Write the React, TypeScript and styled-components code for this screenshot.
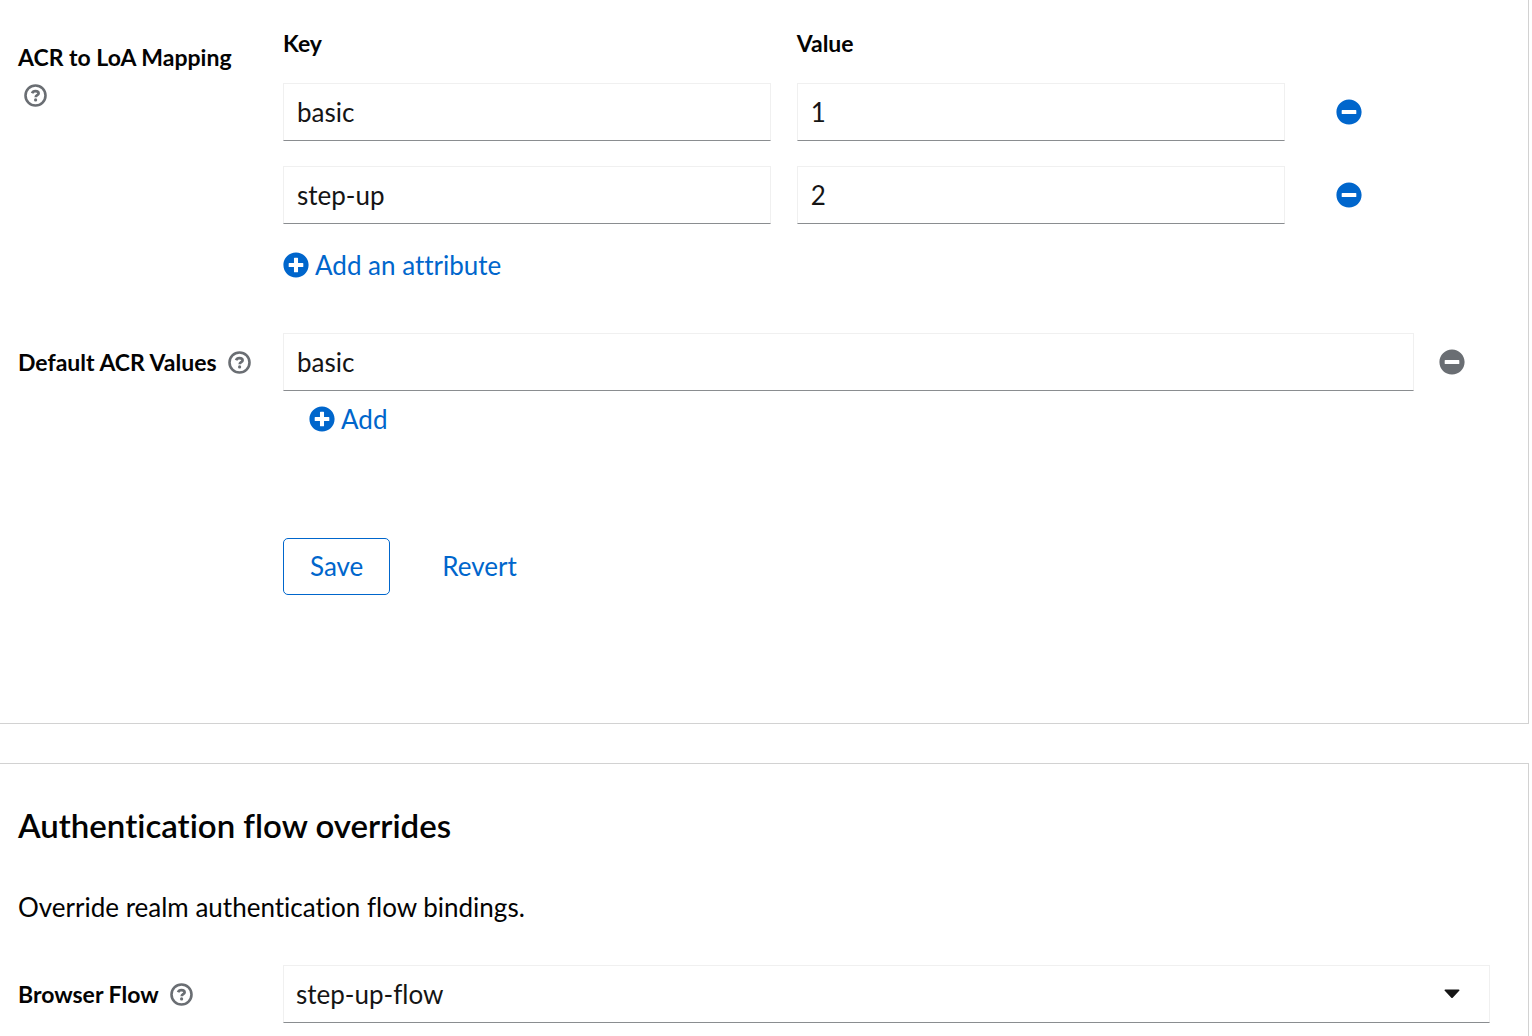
import React, { useState } from "react";
import styled, { createGlobalStyle } from "styled-components";
import { FaMinusCircle, FaPlusCircle } from "react-icons/fa";

const color = {
  text: "#151515",
  heading: "#030303",
  link: "#0066cc",
  muted: "#6a6e73",
  line: "#d2d2d2",
  fieldLine: "#f0f0f0",
  fieldBase: "#8a8d90",
};

const GlobalStyle = createGlobalStyle`
  *, *::before, *::after { box-sizing: border-box; }
  body {
    margin: 0;
    background: #fff;
    color: ${color.heading};
    font-family: Lato, "Liberation Sans", sans-serif;
    font-size: 26px;
    font-variant-ligatures: no-common-ligatures;
  }
  button, input, select { font: inherit; font-variant-ligatures: inherit; }
`;

const Page = styled.main`
  display: flex;
  flex-direction: column;
  gap: 39px;
  min-height: 100vh;
  padding-right: 3px;
  overflow: hidden;
`;

const Card = styled.section<{ $first?: boolean }>`
  padding: ${(p) => (p.$first ? "28px 38px 128px 18px" : "40px 38px 13px 18px")};
  border: 1px solid ${color.line};
  border-left: 0;
  ${(p) => (p.$first ? "border-top: 0;" : "border-bottom: 0; flex: 1;")}
`;

const Title = styled.h2`
  margin: 0 0 42px;
  font-size: 33px;
  line-height: 42px;
  font-weight: 600;
`;

const Description = styled.p`
  margin: 0 0 39px;
  line-height: 38px;
`;

const FormGroup = styled.div<{ $after?: number }>`
  display: grid;
  grid-template-columns: 265px minmax(0, 1fr);
  margin-bottom: ${(p) => p.$after ?? 0}px;
`;

const LabelCell = styled.div`
  padding: 10px 24px 0 0;
  line-height: 38px;
  font-size: 23px;
  font-weight: 700;
`;

const HelpButton = styled.button`
  display: inline-flex;
  margin: 0 0 0 6px;
  padding: 0;
  border: 0;
  background: none;
  color: ${color.muted};
  vertical-align: -3px;
  cursor: pointer;
`;

const FieldCell = styled.div`
  min-width: 0;
`;

const KeyValueGrid = styled.div`
  display: grid;
  grid-template-columns: repeat(12, minmax(0, 1fr));
  column-gap: 26px;
`;

const KeyValueHeader = styled(KeyValueGrid)`
  margin-bottom: 25px;
  font-size: 23px;
  line-height: 30px;
  font-weight: 700;
`;

const KeyValueRow = styled(KeyValueGrid)`
  margin-bottom: 25px;
`;

const WideCell = styled.div`
  grid-column: span 5;
`;

const ActionCell = styled.div`
  display: flex;
  grid-column: span 2;
`;

const TextInput = styled.input`
  display: block;
  width: 100%;
  min-width: 0;
  height: 58px;
  padding: 0 13px;
  border: 1px solid ${color.fieldLine};
  border-bottom-color: ${color.fieldBase};
  border-radius: 0;
  background: #fff;
  color: ${color.text};
`;

const InputRow = styled.div`
  display: flex;
  margin-bottom: 12px;
`;

const RemoveButton = styled.button<{ $muted?: boolean }>`
  display: flex;
  align-items: center;
  padding: 0 25px 1px;
  border: 0;
  background: none;
  color: ${(p) => (p.$muted ? color.muted : color.link)};
  cursor: pointer;
`;

const AddButton = styled.button<{ $indent?: boolean }>`
  display: flex;
  align-items: center;
  gap: 6px;
  margin-left: ${(p) => (p.$indent ? 26 : 0)}px;
  padding: 0;
  border: 0;
  background: none;
  color: ${color.link};
  line-height: 32px;
  cursor: pointer;
`;

const Actions = styled.div`
  display: flex;
  gap: 25px;
`;

const ActionButton = styled.button<{ $outlined?: boolean }>`
  height: 57px;
  padding: 0 26px 2px;
  border: 1px solid ${(p) => (p.$outlined ? color.link : "transparent")};
  border-radius: 5px;
  background: none;
  color: ${color.link};
  cursor: pointer;
`;

const SelectBox = styled.div`
  display: grid;
  grid-template-columns: minmax(0, 1fr) auto;
  align-items: center;
`;

const Select = styled.select`
  grid-area: 1 / 1 / 2 / 3;
  height: 58px;
  padding: 0 64px 0 12px;
  border: 1px solid ${color.fieldLine};
  border-bottom-color: ${color.fieldBase};
  border-radius: 0;
  background: #fff;
  color: ${color.text};
  appearance: none;
`;

const Caret = styled.svg`
  grid-area: 1 / 2;
  margin-right: 30px;
  pointer-events: none;
`;

function Help({ topic }: { topic: string }) {
  return (
    <HelpButton type="button" aria-label={`Help for ${topic}`}>
      <svg width="23" height="23" viewBox="0 0 23 23" fill="none" aria-hidden="true">
        <circle cx="11.5" cy="11.5" r="10" stroke="currentColor" strokeWidth="2.6" />
        <path
          d="M8.1 9.2C8.6 7.8 9.8 7.1 11.4 7.1c1.9 0 3.2 .9 3.2 2.3 0 1.8-2.9 1.8-2.9 3.8"
          stroke="currentColor"
          strokeWidth="2.7"
        />
        <circle cx="11.6" cy="15.9" r="1.6" fill="currentColor" />
      </svg>
    </HelpButton>
  );
}

export default function App() {
  const [mappings, setMappings] = useState([
    { key: "basic", value: "1" },
    { key: "step-up", value: "2" },
  ]);
  const [acr, setAcr] = useState(["basic"]);

  const update = (index: number, field: "key" | "value", text: string) =>
    setMappings(mappings.map((m, i) => (i === index ? { ...m, [field]: text } : m)));

  return (
    <>
      <GlobalStyle />
      <Page>
        <Card $first>
          <FormGroup $after={52}>
            <LabelCell>
              <span id="acr-loa">ACR to LoA Mapping</span> <Help topic="ACR to LoA Mapping" />
            </LabelCell>
            <FieldCell role="group" aria-labelledby="acr-loa">
              <KeyValueHeader>
                <WideCell id="col-key">Key</WideCell>
                <WideCell id="col-value">Value</WideCell>
              </KeyValueHeader>
              {mappings.map((m, i) => (
                <KeyValueRow key={i}>
                  <WideCell>
                    <TextInput
                      aria-labelledby="col-key"
                      value={m.key}
                      onChange={(e) => update(i, "key", e.target.value)}
                    />
                  </WideCell>
                  <WideCell>
                    <TextInput
                      aria-labelledby="col-value"
                      value={m.value}
                      onChange={(e) => update(i, "value", e.target.value)}
                    />
                  </WideCell>
                  <ActionCell>
                    <RemoveButton
                      type="button"
                      aria-label="Remove attribute"
                      onClick={() => setMappings(mappings.filter((_, n) => n !== i))}
                    >
                      <FaMinusCircle size={26} />
                    </RemoveButton>
                  </ActionCell>
                </KeyValueRow>
              ))}
              <AddButton type="button" onClick={() => setMappings([...mappings, { key: "", value: "" }])}>
                <FaPlusCircle size={26} />
                Add an attribute
              </AddButton>
            </FieldCell>
          </FormGroup>

          <FormGroup $after={103}>
            <LabelCell>
              <label htmlFor="acr-0">Default ACR Values</label> <Help topic="Default ACR Values" />
            </LabelCell>
            <FieldCell>
              {acr.map((value, i) => (
                <InputRow key={i}>
                  <TextInput
                    id={`acr-${i}`}
                    aria-label={i > 0 ? "Default ACR Values" : undefined}
                    value={value}
                    onChange={(e) => setAcr(acr.map((v, n) => (n === i ? e.target.value : v)))}
                  />
                  <RemoveButton type="button" $muted aria-label="Remove value">
                    <FaMinusCircle size={26} />
                  </RemoveButton>
                </InputRow>
              ))}
              <AddButton type="button" $indent onClick={() => setAcr([...acr, ""])}>
                <FaPlusCircle size={26} />
                Add
              </AddButton>
            </FieldCell>
          </FormGroup>

          <FormGroup>
            <span />
            <Actions>
              <ActionButton type="button" $outlined>
                Save
              </ActionButton>
              <ActionButton type="button">Revert</ActionButton>
            </Actions>
          </FormGroup>
        </Card>

        <Card>
          <Title>Authentication flow overrides</Title>
          <Description>Override realm authentication flow bindings.</Description>
          <FormGroup>
            <LabelCell>
              <label htmlFor="browser-flow">Browser Flow</label> <Help topic="Browser Flow" />
            </LabelCell>
            <SelectBox>
              <Select id="browser-flow" defaultValue="step-up-flow">
                <option value="step-up-flow">step-up-flow</option>
              </Select>
              <Caret width="16" height="10" viewBox="0 0 16 10" aria-hidden="true">
                <path d="M1.3.5h13.4c.8 0 1.1.8.5 1.3L8.7 8.7c-.4.4-1 .4-1.4 0L.8 1.8C.2 1.3.5.5 1.3.5Z" fill={color.text} />
              </Caret>
            </SelectBox>
          </FormGroup>
        </Card>
      </Page>
    </>
  );
}
